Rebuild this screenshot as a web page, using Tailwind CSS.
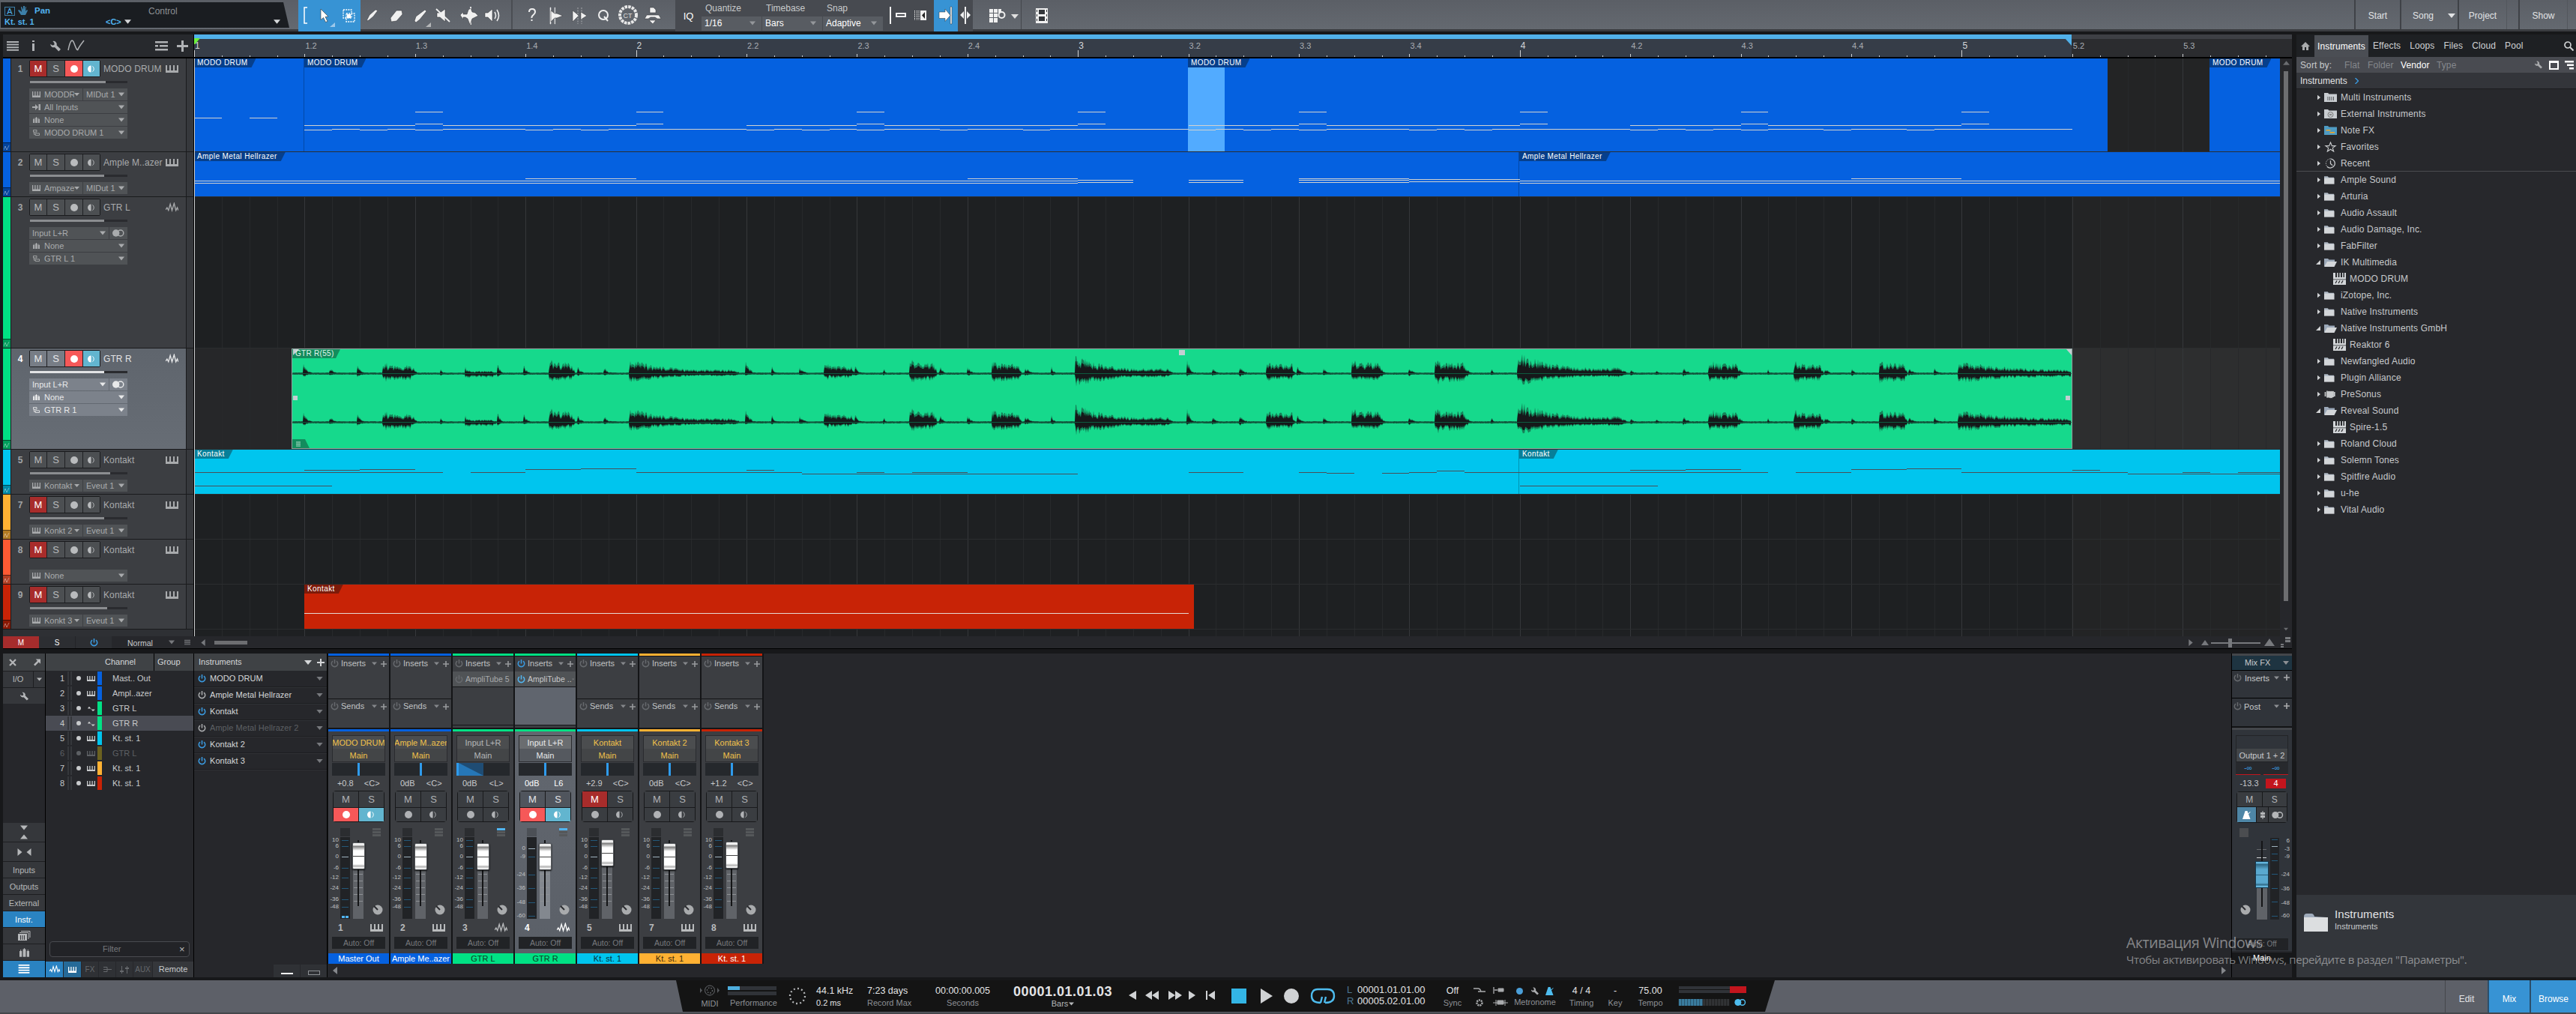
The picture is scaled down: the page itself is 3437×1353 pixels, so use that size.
<!DOCTYPE html>
<html lang="en">
<head>
    <meta charset="UTF-8">
    <meta name="viewport" content="width=device-width, initial-scale=1.0">
    <title>Studio One - Song</title>
    <script src="https://cdn.jsdelivr.net/npm/@tailwindcss/browser@4"></script>
    <style> body { font-family: 'Liberation Sans', Arial, sans-serif; } </style>
</head>
<body class="w-[3437px] h-[1353px] overflow-hidden bg-[#17181a] text-[#c8cacc] text-[11px] leading-none flex flex-col relative whitespace-nowrap">

    <!-- Icon sprite -->
    <svg class="hidden">
        <symbol id="keys" viewBox="0 0 17 10" preserveAspectRatio="none"><path fill="currentColor" d="M0 0h2v7h3V0h2v7h3V0h2v7h3V0h2v10H0z"/></symbol>
        <symbol id="wave" viewBox="0 0 18 14"><path fill="none" stroke="currentColor" stroke-width="1.400" d="M0 10l2-3 2 4L6.500 2 9 11 12 1l2.500 10 2-4 1.500 4"/></symbol>
        <symbol id="sine" viewBox="0 0 12 8"><path fill="currentColor" d="M0 4h1q2-5 4-1l1 2h1h5q-3 5-5 1L6 4z"/></symbol>
        <symbol id="down" viewBox="0 0 10 6"><path fill="currentColor" d="M0 0h10L5 6z"/></symbol>
        <symbol id="right" viewBox="0 0 6 10"><path fill="currentColor" d="M0 0v10l6-5z"/></symbol>
        <symbol id="left" viewBox="0 0 6 10"><path fill="currentColor" d="M6 0v10L0 5z"/></symbol>
        <symbol id="power" viewBox="0 0 12 12"><path fill="none" stroke="currentColor" stroke-width="1.700" d="M3.300 2.200a4.600 4.600 0 1 0 5.400 0M6 0v6"/></symbol>
        <symbol id="plus" viewBox="0 0 10 10"><path fill="currentColor" d="M4 0h2v4h4v2H6v4H4V6H0V4h4z"/></symbol>
        <symbol id="monitor" viewBox="0 0 12 10"><path fill="currentColor" d="M5 0v10a5 5 0 0 1 0-10z"/><path fill="none" stroke="currentColor" d="M7 1a5 5 0 0 1 0 8"/></symbol>
        <symbol id="stereo" viewBox="0 0 17 10"><circle cx="5" cy="5" r="5" fill="currentColor"/><circle cx="11.500" cy="5" r="4.200" fill="none" stroke="currentColor" stroke-width="1.600"/></symbol>
        <symbol id="auto" viewBox="0 0 8 8"><path fill="none" stroke="currentColor" stroke-width=".8" d="M0 7l2-5 2 5 3-6"/></symbol>
        <symbol id="input" viewBox="0 0 11 8"><path fill="currentColor" d="M0 3h4V0l4 4-4 4V5H0zM8.500 0H11v8H8.500z"/></symbol>
        <symbol id="faders" viewBox="0 0 10 9"><path fill="currentColor" d="M0 3h2.500v6H0zM3.500 1h3v8h-3zM7.500 3H10v6H7.500zM4.500 0h1v2h-1zM1 1.500h.7V4H1zM8.300 1.500H9V4h-.7z"/></symbol>
        <symbol id="layers" viewBox="0 0 10 9"><path fill="none" stroke="currentColor" d="M.5.5h5v3h-5zM3.500 5.500h6v3h-6zM1.500 3.500V7h2"/></symbol>
        <symbol id="wrench" viewBox="0 0 14 14"><path fill="currentColor" d="M4 1a4 4 0 0 1 5 5l5 5-2.500 2.500-5-5a4 4 0 0 1-5.300-4L3.500 6 6 5.500 6 3z"/></symbol>
        <symbol id="list" viewBox="0 0 16 13"><path fill="currentColor" d="M0 0h16v2H0zM0 3.600h16v2H0zM0 7.200h16v2H0zM0 10.800h16v2H0z"/></symbol>
        <symbol id="folder" viewBox="0 0 15 11"><path fill="#aeb8c4" d="M0 0h5l1.500 1.500H14V4H0z"/><path fill="#d3d6d9" d="M0 2.500h14.500V11H0z"/></symbol>
        <symbol id="folder-open" viewBox="0 0 17 11"><path fill="#9ba8b8" d="M0 0h5l1.500 1.500H14V4L1 10H0z"/><path fill="#d3d6d9" d="M4 4h13l-3.500 7H0z"/></symbol>
        <symbol id="folder-multi" viewBox="0 0 17 12"><path fill="#c9cdd1" d="M0 0h5l1.500 1.500H17V12H0z"/><path stroke="#55585c" d="M5 5v5M7.500 5v5M10 5v5M12.500 5v5"/></symbol>
        <symbol id="folder-ext" viewBox="0 0 17 12"><path fill="#c9cdd1" d="M0 0h5l1.500 1.500H17V12H0z"/><circle cx="8.500" cy="7" r="3.500" fill="none" stroke="#777"/><path stroke="#777" d="M7 8l3-2M7 6l3 2"/></symbol>
        <symbol id="folder-fx" viewBox="0 0 17 12"><path fill="#4f9cc4" d="M0 0h5l1.500 1.500H17V12H0z"/><path fill="#f5a623" d="M2.500 5h6v1.500h-6zM7.500 8H14v1.500H7.500z"/></symbol>
        <symbol id="star" viewBox="0 0 16 15"><path fill="none" stroke="#c8cacc" stroke-width="1.200" d="M8 1l2 5h5l-4 3 1.500 5L8 11l-4.500 3L5 9 1 6h5z"/></symbol>
        <symbol id="recent" viewBox="0 0 16 15"><path fill="none" stroke="#c8cacc" stroke-width="1.400" d="M8 1a6.500 6.500 0 1 1-5 11M8 3.500V8l3 2.500"/><path fill="none" stroke="#c8cacc" stroke-dasharray="1.500 1.500" d="M2.500 11A6.500 6.500 0 0 1 8 1"/></symbol>
        <symbol id="vst" viewBox="0 0 17 16"><path fill="#d3d6d9" d="M0 0h17v16H0z"/><path fill="#27282c" d="M3 0h2v6H3zM6.500 0h2v6h-2zM10 0h2v6h-2zM13.500 0h1.500v6h-1.500zM0 8.500h17v.7H0z"/><path stroke="#27282c" stroke-width="1.300" d="M3 14l2-3.500M7 14l2-3.500M11 14l2-3.500"/></symbol>
        <symbol id="presonus" viewBox="0 0 15 12"><path fill="none" stroke="#c8cacc" stroke-width="1.700" d="M1.500 3v6M4 1.500v9L6 2v8.500L8 2v9l2-9v9l2-9v8M13.800 3v6"/></symbol>
        <symbol id="metro" viewBox="0 0 12 12"><path fill="currentColor" d="M4 0h3l4.500 12H0zM8 4l3-3 .7.7L8.500 5z"/></symbol>
    </svg>

    <!-- Toolbar -->
    <header class="h-[42px] shrink-0 flex bg-gradient-to-b from-[#5b5f66] to-[#646970] border-b-[3px] border-[#3a3c40]">
        <div class="w-[398px] pt-[3px] pl-px">
            <div class="w-[385px] h-[34px] bg-[#1a1d21] [clip-path:polygon(0_0,377px_0,100%_100%,0_100%)] px-[5px] pt-[4px] text-[12px]">
                <div class="flex items-center h-[15px] text-[#51b4ef]">
                    <span class="w-[14px] h-[12px] border border-[#3c7fa8] text-[11px] text-center mr-1">A</span>
                    <svg class="w-[14px] h-[13px]" viewBox="0 0 14 13"><path fill="#3c7fa8" d="M3 6L1 5 0 6l4 6h6l3-6-1-1-2 2 1-6h-1L9 5V0H7v5L5 1H4l1 7z"/></svg>
                    <span class="ml-2 font-bold text-[11.500px] w-[152px]">Pan</span>
                    <span class="text-[#8d9094]">Control</span>
                </div>
                <div class="flex items-center h-[14px] text-[#51b4ef] text-[11px] font-bold">
                    <span class="w-[135px]">Kt. st. 1</span><span>&lt;C&gt;</span>
                    <svg class="w-[9px] h-[6px] ml-1 text-[#d5d7d9]"><use href="#down"/></svg>
                    <svg class="w-[9px] h-[6px] ml-[190px] text-[#d5d7d9]"><use href="#down"/></svg>
                </div>
            </div>
        </div>
        <div class="w-[83px] h-[42px] bg-[#3793d4] flex items-center text-white">
            <svg class="w-[83px] h-[42px]" viewBox="0 0 83 42"><path fill="none" stroke="#fff" stroke-width="1.500" d="M12 10H8v21h4"/><path fill="#fff" stroke="#333" stroke-width=".6" d="M30 12l10 10-4 .5 3 6-2.500 1-3-6-3.500 3z"/><path fill="#9cc8ea" d="M49 30v6h-7z"/><path fill="none" stroke="#fff" stroke-width="1.300" stroke-dasharray="2 1.200" d="M60 13h11v11H60zM64 18h11v11H64z"/><path fill="#fff" d="M65 18l6 6M65 19h5v5h-5z"/></svg>
        </div>
        <svg class="w-[420px] h-[39px]" viewBox="0 0 420 39" fill="#f0f0f0" stroke="#2d2f33" stroke-width=".5">
            <path d="M8 28l4-8 8-7 3 1-6 8-6 5zM40 24l8-10 7 0 1 5-8 9-7 1zM72 28l2-6 12-9 2 2-9 11-5 4z"/>
            <path fill="#b5b7b9" stroke="none" d="M94 30v6h-7z"/>
            <path d="M102 17h4l7-5v17l-7-6h-4z"/><path stroke="#f0f0f0" stroke-width="1.800" d="M101 12l18 17M147 9v5M147 28v5"/>
            <path d="M133 20l4-4v3h5l2-6 3-2 2 5 4 1 4 4-4 2-4 2-3 8-3-8-3-2h-3v3z"/>
            <path d="M166 17h4l6-5v17l-6-6h-4z"/><path fill="none" stroke="#f0f0f0" stroke-width="1.500" d="M179 16q3 5 0 9M182 13q5 8 0 15"/>
            <path stroke="#44474c" stroke-width="1.500" d="M202 0v39"/>
            <path fill="none" stroke="#f0f0f0" stroke-width="2" d="M225 16q0-4 4-4t4 4q0 2-2.500 4t-2 4M228.500 26v2"/>
            <path stroke="#f0f0f0" d="M253 10h1v22h-1zM259 10h.6v22h-.6z"/><path d="M254 14l5 4h3l8 3-8 3h-3l-5 5z"/>
            <path d="M283 14l5 4 3 3-3 3-5 5zM294 16l8 5-8 5z"/><path stroke="#f0f0f0" stroke-dasharray="2 1.500" d="M290 10v22M295 10v22"/>
            <circle cx="324" cy="20" r="6" fill="none" stroke="#f0f0f0" stroke-width="2"/><path stroke="#f0f0f0" stroke-width="2" d="M325 22l5 6"/>
            <circle cx="357" cy="20" r="11" fill="none" stroke="#e8e8e8" stroke-width="4" stroke-dasharray="3.500 1.200"/><text x="350.500" y="24" font-size="9" stroke="none" fill="#ddd">CT</text>
            <path d="M386 10h5l3 3v4h-8zM379 25l3-5h16l3 5h-5l-3-2h-6l-3 2zM385 27h9l-4 5z"/>
        </svg>
        <div class="w-[397px] h-[42px] bg-[#474a50] flex items-center">
            <span class="w-[35px] text-center text-[13px] text-white">IQ</span>
            <div class="flex gap-px text-[12px]">
                <div class="w-[80px]"><div class="h-[20px] pl-[5px] pt-[3px]">Quantize</div><div class="h-[19px] bg-[#585c62] flex items-center justify-between pl-1 pr-2 text-white">1/16<svg class="w-[8px] h-[6px] text-[#94979b]"><use href="#down"/></svg></div></div>
                <div class="w-[80px]"><div class="h-[20px] pl-[5px] pt-[3px]">Timebase</div><div class="h-[19px] bg-[#585c62] flex items-center justify-between pl-1 pr-2 text-white">Bars<svg class="w-[8px] h-[6px] text-[#94979b]"><use href="#down"/></svg></div></div>
                <div class="w-[80px]"><div class="h-[20px] pl-[5px] pt-[3px]">Snap</div><div class="h-[19px] bg-[#585c62] flex items-center justify-between pl-1 pr-2 text-white">Adaptive<svg class="w-[8px] h-[6px] text-[#94979b]"><use href="#down"/></svg></div></div>
            </div>
            <svg class="w-[68px] h-[42px]" viewBox="0 0 68 42" fill="#f0f0f0"><path d="M9 9h2v23H9z"/><path fill="none" stroke="#f0f0f0" stroke-width="2" d="M18 18h12v4H18z"/><path d="M50 14h8v13h-8z"/><path fill="#222" d="M56 16v9l-4-4.500z"/><path stroke="#f0f0f0" stroke-dasharray="1.500 1" d="M42.500 14v13M45.500 14v13M48 14v13"/></svg>
            <div class="w-[32px] h-[42px] bg-[#3793d4]"><svg class="w-[32px] h-[42px]" viewBox="0 0 32 42" fill="#fff" stroke="#333" stroke-width=".5"><path d="M7 16h8v-4l7 8.500-7 8v-4H7zM22 9h2v23h-2z"/></svg></div>
            <svg class="w-[19px] h-[42px]" viewBox="0 0 19 42" fill="#f0f0f0"><path d="M9 9h2v23H9zM8 15v10l-5-5zM12 15v10l5-5z"/></svg>
        </div>
        <svg class="w-[140px] h-[39px]" viewBox="0 0 140 39"><path fill="#f0f0f0" d="M22 12h5v5h-5zM28 12h5v5h-5zM34 12h4v5h-4zM22 18h5v5h-5zM28 18h5v5h-5zM22 24h5v6h-5zM28 24h5v6h-5z"/><circle cx="38.500" cy="20" r="4" fill="none" stroke="#f0f0f0" stroke-width="2"/><path fill="#e0e0e0" d="M51 19h10l-5 6z"/><path stroke="#44474c" d="M64.500 0v39"/><path fill="#f0f0f0" d="M84 11h16v20H84z"/><path fill="#33363a" d="M88 13h8v6h-8zM88 22h8v6h-8zM85 13h1v3h-1zM85 19h1v3h-1zM85 25h1v3h-1zM98 13h1v3h-1zM98 19h1v3h-1zM98 25h1v3h-1z"/></svg>
        <nav class="ml-auto flex text-[12px] text-[#e2e3e5] items-stretch">
            <span class="w-[61px] border-l-2 border-[#3f4247] flex items-center justify-center pt-[2px]">Start</span>
            <span class="w-[60px] border-l-2 border-[#3f4247] flex items-center justify-center pt-[2px]">Song</span>
            <span class="w-[17px] flex items-center justify-center pt-[2px]"><svg class="w-[10px] h-[6px]"><use href="#down"/></svg></span>
            <span class="w-[65px] border-l-2 border-[#3f4247] flex items-center justify-center pt-[2px]">Project</span>
            <span class="w-[16px] border-l border-[#53575d]"></span>
            <span class="w-[65px] border-l-2 border-[#3f4247] flex items-center justify-center pt-[2px]">Show</span>
            <span class="w-[12px] border-l border-[#53575d]"></span>
        </nav>
    </header>

    <main class="flex h-[1258px] mt-[4px] pl-[4px] gap-[6px]">
        <div class="w-[3054px] flex flex-col gap-[6px]">

            <!-- Arrangement -->
            <section class="h-[820px] flex flex-col bg-black">
                <div class="flex h-[803px]">
                    <div class="w-[254px] flex flex-col bg-[#2e3034]">
                        <div class="h-[32px] bg-[#27292d] border-b-2 border-black flex items-center text-[#b0b2b5] pl-[5px]">
                            <svg class="w-[16px] h-[13px]"><use href="#list"/></svg>
                            <svg class="w-[5px] h-[14px] ml-[17px]" viewBox="0 0 5 14"><path fill="currentColor" d="M1 0h3v2H1zM1 4h3v10H1z"/></svg>
                            <svg class="w-[15px] h-[15px] ml-[19px]"><use href="#wrench"/></svg>
                            <svg class="w-[24px] h-[16px] ml-[9px]" viewBox="0 0 24 16"><path fill="none" stroke="currentColor" stroke-width="1.500" d="M1 14Q5-6 9 5t5 8 8-12"/></svg>
                            <svg class="w-[17px] h-[13px] ml-[93px]" viewBox="0 0 17 13"><path fill="currentColor" d="M0 0h17v2.500H0zM0 5h4v2.500H0zM6 5h11v2.500H6zM0 10h17v2.500H0z"/></svg>
                            <svg class="w-[15px] h-[15px] ml-[12px]"><use href="#plus"/></svg>
                        </div>
                        <div id="track-list" class="bg-[#1a1b1d]"></div>
                    </div>
                    <div class="w-px bg-black"></div>
                    <div class="w-[2799px] flex flex-col">
                        <div id="ruler" class="relative h-[32px] bg-[#2b2c2f] border-b-2 border-black overflow-hidden"></div>
                        <div class="flex h-[771px]">
                            <div id="timeline" class="relative w-[2783px] bg-[#1e2022] overflow-hidden"></div>
                            <div class="w-[16px] bg-[#26272b] flex flex-col items-center pt-[3px]">
                                <svg class="w-[9px] h-[6px] text-[#6a6c70] rotate-180"><use href="#down"/></svg>
                                <div class="w-[6px] mt-[8px] h-[707px] bg-[#6d6e71]"></div>
                                <svg class="w-[6px] h-[5px] text-[#6a6c70] mt-[35px]"><use href="#down"/></svg>
                            </div>
                        </div>
                    </div>
                </div>
                <div class="h-[17px] bg-[#26272b] flex items-center border-b border-black text-[10px] text-white">
                    <span class="w-[48px] h-[16px] bg-[#a62c2c] flex items-center justify-center pt-px">M</span>
                    <span class="w-[49px] h-[16px] bg-[#2c2e32] border-r border-[#232428] flex items-center justify-center pt-px">S</span>
                    <span class="w-[48px] h-[16px] bg-[#2c2e32] flex items-center justify-center text-[#3a9ae0]"><svg class="w-[11px] h-[11px]"><use href="#power"/></svg></span>
                    <span class="ml-[21px] w-[53px] text-[#c8cacc] text-[10.500px] pt-[2px]">Normal</span>
                    <svg class="w-[8px] h-[6px] ml-[2px] text-[#77797d]"><use href="#down"/></svg>
                    <svg class="w-[8px] h-[8px] ml-[13px] text-[#77797d]"><use href="#list"/></svg>
                    <svg class="w-[6px] h-[9px] ml-[14px] text-[#77797d]"><use href="#left"/></svg>
                    <span class="ml-[12px] w-[44px] h-[5px] bg-[#6d6e71]"></span>
                    <svg class="w-[6px] h-[9px] ml-auto text-[#77797d]"><use href="#right"/></svg>
                    <svg class="w-[122px] h-[15px] ml-[9px] mr-[1px]" viewBox="0 0 122 15" fill="#77797d"><path d="M2 11l5-7 5 7zM15 7h66v2H15zM38 2h5v12h-5zM86 12l7-10 7 10zM114 0h7v3h-7zM114 4h7v3h-7zM108 9h4v2h-4zM108 12h4v2h-4z"/></svg>
                </div>
            </section>

            <!-- Mixer console -->
            <section class="h-[432px] flex gap-px bg-black">
                <div class="w-[56px] flex flex-col gap-px bg-[#1d1e21] text-[#b5b7b9]">
                    <div class="h-[23px] bg-[#3f4245] flex items-center justify-between px-[8px]">
                        <svg class="w-[10px] h-[10px]" viewBox="0 0 10 10"><path stroke="currentColor" stroke-width="2.200" d="M1 1l8 8M9 1L1 9"/></svg>
                        <svg class="w-[9px] h-[10px] mr-[-2px]" viewBox="0 0 10 10"><path fill="currentColor" d="M3 0h7v7L7.500 4.500 2 10 0 8l5.500-5.500z"/></svg>
                    </div>
                    <div class="h-[21px] flex gap-px"><span class="w-[40px] bg-[#35373b] flex items-center justify-center">I/O</span><span class="w-[15px] bg-[#35373b] flex items-center justify-center"><svg class="w-[7px] h-[5px]"><use href="#down"/></svg></span></div>
                    <div class="h-[21px] bg-[#35373b] flex items-center justify-center"><svg class="w-[12px] h-[12px]"><use href="#wrench"/></svg></div>
                    <div class="h-[159px] -my-px bg-[#26272b]"></div>
                    <div class="h-[25px] bg-[#35373b] flex flex-col items-center justify-between py-[3px]"><svg class="w-[10px] h-[7px]"><use href="#down"/></svg><svg class="w-[10px] h-[7px] rotate-180"><use href="#down"/></svg></div>
                    <div class="h-[25px] bg-[#35373b] flex items-center justify-center gap-[5px]"><svg class="w-[7px] h-[10px]"><use href="#right"/></svg><svg class="w-[7px] h-[10px]"><use href="#left"/></svg></div>
                    <div class="h-[21px] bg-[#35373b] flex items-center justify-center pt-px">Inputs</div>
                    <div class="h-[21px] bg-[#35373b] flex items-center justify-center pt-px">Outputs</div>
                    <div class="h-[21px] bg-[#35373b] flex items-center justify-center pt-px">External</div>
                    <div class="h-[21px] bg-[#2a83c2] flex items-center justify-center pt-px text-white">Instr.</div>
                    <div class="h-[21px] bg-[#35373b] flex items-center justify-center"><svg class="w-[17px] h-[13px]" viewBox="0 0 17 13"><path fill="currentColor" d="M0 4h12v9H0z"/><path stroke="#35373b" d="M3.500 6v6M6 6v6M8.500 6v6"/><path fill="none" stroke="currentColor" d="M2 2.500h12V11M4 .5h12V9"/></svg></div>
                    <div class="h-[21px] bg-[#35373b] flex items-center justify-center"><svg class="w-[13px] h-[12px]"><use href="#faders"/></svg></div>
                    <div class="grow bg-[#2a83c2] flex items-center justify-center text-white"><svg class="w-[16px] h-[12px]"><use href="#list"/></svg></div>
                </div>

                <div class="w-[197px] flex flex-col bg-[#26272b]">
                    <div class="h-[23px] bg-[#3f4245] flex items-center text-[#d5d7d9]"><span class="pl-[79px] w-[145px] h-full flex items-center border-r border-black">Channel</span><span class="pl-[4px]">Group</span></div>
                    <div id="channel-list"></div>
                    <div class="mt-auto mx-[5px] h-[21px] border border-[#494b50] rounded-sm bg-[#222327] flex items-center text-[#77797d]"><span class="w-[160px] pl-[70px]">Filter</span><span class="pl-[12px] text-[13px] text-[#b5b7b9]">×</span></div>
                    <div class="mt-[6px] h-[21px] flex gap-px text-[#66696d]">
                        <span class="w-[23px] bg-[#2a83c2] text-white flex items-center justify-center"><svg class="w-[14px] h-[11px]"><use href="#wave"/></svg></span>
                        <span class="w-[23px] bg-[#266a98] text-white flex items-center justify-center"><svg class="w-[11px] h-[8px]"><use href="#keys"/></svg></span>
                        <span class="w-[22px] bg-[#2f3135] flex items-center justify-center text-[10px]">FX</span>
                        <span class="w-[22px] bg-[#2f3135] flex items-center justify-center"><svg class="w-[11px] h-[7px]" viewBox="0 0 11 7"><path stroke="currentColor" fill="none" d="M0 .5h5v6H0M0 3.500h11"/></svg></span>
                        <span class="w-[22px] bg-[#2f3135] flex items-center justify-center"><svg class="w-[12px] h-[10px]" viewBox="0 0 12 10"><path fill="currentColor" d="M2 0h1v10H2zM0 6h5v2H0zM9 0h1v10H9zM7 2h5v2H7z"/></svg></span>
                        <span class="w-[25px] bg-[#2f3135] flex items-center justify-center text-[10px]">AUX</span>
                        <span class="grow bg-[#35373b] flex items-center justify-center text-[#c8cacc]">Remote</span>
                    </div>
                </div>

                <div class="w-[177px] flex flex-col bg-[#26272b]">
                    <div class="h-[23px] bg-[#3f4245] flex items-center text-[#d5d7d9] pl-[6px] pr-[3px]">Instruments<svg class="w-[10px] h-[6px] ml-auto"><use href="#down"/></svg><svg class="w-[10px] h-[10px] ml-[7px]"><use href="#plus"/></svg></div>
                    <div id="instrument-list"></div>
                    <div class="mt-auto flex justify-end gap-px h-[17px] text-[#b5b7b9]">
                        <span class="w-[35px] bg-[#2f3135] flex justify-center items-end pb-[4px]"><span class="w-[16px] h-[2px] bg-white"></span></span>
                        <span class="w-[35px] bg-[#2f3135] flex justify-center items-end pb-[3px]"><span class="w-[16px] h-[6px] border border-[#8d9094]"></span></span>
                    </div>
                </div>

                <div class="w-[2540px] flex flex-col bg-[#26272b]">
                    <div id="strips" class="flex gap-[2px] w-[582px] bg-[#141517] pr-[2px] pl-[1px]"></div>
                    <div class="flex items-center justify-between grow px-[7px] text-[#85878b]"><svg class="w-[6px] h-[10px]"><use href="#left"/></svg><svg class="w-[6px] h-[10px]"><use href="#right"/></svg></div>
                </div>

                <!-- Main output -->
                <div class="w-[80px] flex flex-col bg-[#26272b]">
                    <div class="h-[3px] bg-[#43464a]"></div>
                    <div class="h-[20px] bg-[#1e3441] border-b border-black flex items-center pl-[17px] pr-[4px] justify-between">Mix FX<svg class="w-[8px] h-[5px] text-[#8d9094]"><use href="#down"/></svg></div>
                    <div class="h-[37px] bg-[#30343a] border-b border-black flex items-start pt-[4px] pl-[2px] pr-[3px]"><svg class="w-[11px] h-[11px] text-[#66696d]"><use href="#power"/></svg><span class="ml-[4px] mt-px">Inserts</span><svg class="w-[7px] h-[5px] ml-auto mt-[3px] text-[#8d9094]"><use href="#down"/></svg><svg class="w-[8px] h-[8px] ml-[6px] mt-px text-[#a9abad]"><use href="#plus"/></svg></div>
                    <div class="h-[39px] bg-[#30343a] border-b-2 border-[#121315] flex items-start pt-[5px] pl-[2px] pr-[3px]"><svg class="w-[11px] h-[11px] text-[#66696d]"><use href="#power"/></svg><span class="ml-[3px] mt-px">Post</span><svg class="w-[7px] h-[5px] ml-auto mt-[3px] text-[#8d9094]"><use href="#down"/></svg><svg class="w-[8px] h-[8px] ml-[6px] mt-px text-[#a9abad]"><use href="#plus"/></svg></div>
                    <div class="h-[298px] bg-[#30343a] border-t-[3px] border-[#43464a] flex flex-col px-[5px] pt-[7px]">
                        <div class="h-[36px] border border-[#222427] flex flex-col justify-end"><div class="h-[17px] bg-[#424548] flex items-center justify-center pt-px">Output 1 + 2</div></div>
                        <div class="h-[17px] flex gap-[4px] text-[#3a9ae0] text-[10px] bg-[#27292d]"><span class="grow border-b border-[#c3151d] flex items-center justify-center">-∞</span><span class="grow border-b border-[#c3151d] flex items-center justify-center">-∞</span></div>
                        <div class="h-[22px] flex items-center"><span class="w-[36px] text-center">-13.3</span><span class="ml-[4px] w-[27px] h-[13px] bg-[#c3151d] text-white flex items-center justify-center">4</span></div>
                        <div class="mx-[1px] h-[42px] border border-[#17181a] rounded-sm flex flex-col gap-px bg-[#17181a] text-[#b5b7b9]">
                            <div class="h-[19px] flex gap-px text-[12px]"><span class="w-1/2 bg-[#393c40] flex items-center justify-center">M</span><span class="w-1/2 bg-[#393c40] flex items-center justify-center">S</span></div>
                            <div class="h-[20px] flex gap-px"><span class="w-[25px] bg-[#4e86a6] text-white flex items-center justify-center"><svg class="w-[11px] h-[11px]"><use href="#metro"/></svg></span><span class="w-[15px] bg-[#393c40] flex items-center justify-center"><svg class="w-[6px] h-[11px]" viewBox="0 0 6 11"><path fill="currentColor" d="M2.500 0h1v11h-1zM0 2h6v3H0zM0 6h6v3H0z"/></svg></span><span class="grow bg-[#393c40] flex items-center justify-center"><svg class="w-[16px] h-[9px]"><use href="#stereo"/></svg></span></div>
                        </div>
                        <div id="main-fader" class="relative h-[131px] mt-[7px] -mx-[5px]"></div>
                        <div class="h-[16px] mt-[16px] bg-[#212326] flex items-center justify-center text-[10px] text-[#77797d]">Auto: Off</div>
                    </div>
                    <div class="h-[15px] mt-[2px] bg-[#17181a] flex items-center justify-center text-white">Main</div>
                </div>
            </section>
        </div>

        <!-- Browser -->
        <aside class="w-[373px] flex flex-col bg-[#27282c]">
            <nav class="h-[30px] bg-[#1e2023] flex items-center text-[12px] text-[#d0d2d4] tracking-[.1px]">
                <svg class="w-[12px] h-[11px] ml-[6px] mr-[6px] text-[#a9abad]" viewBox="0 0 12 11"><path fill="currentColor" d="M6 0l6 6h-2v5H7V7H5v4H2V6H0z"/></svg>
                <span class="w-[72px] h-[29px] self-end bg-[#4b4e54] flex items-center justify-center text-white">Instruments</span>
                <span class="ml-[6px]">Effects</span><span class="ml-[12px]">Loops</span><span class="ml-[12px]">Files</span><span class="ml-[12px]">Cloud</span><span class="ml-[12px]">Pool</span>
                <svg class="w-[13px] h-[13px] ml-auto mr-[3px]" viewBox="0 0 13 13"><circle cx="5" cy="5" r="4" fill="none" stroke="currentColor" stroke-width="1.700"/><path stroke="currentColor" stroke-width="2" d="M8 8l4.500 4.500"/></svg>
            </nav>
            <div class="h-[21px] bg-[#494b51] flex items-center text-[12px] text-[#85888d] pl-[5px] tracking-[.1px]">
                <span class="text-[#c8cacc] w-[59px]">Sort by:</span><span class="w-[31px]">Flat</span><span class="w-[44px]">Folder</span><span class="w-[48px] text-white">Vendor</span><span>Type</span>
                <svg class="w-[11px] h-[11px] ml-auto mr-[9px] text-[#a9abad]"><use href="#wrench"/></svg>
                <span class="w-[13px] h-[12px] border-2 border-t-[3px] border-white mr-[8px]"></span>
                <svg class="w-[12px] h-[12px] mr-[3px]" viewBox="0 0 12 12"><path fill="#fff" d="M0 0h12v2.500H0zM3 4.500h9V7H3zM6 9h6v2.500H6z"/></svg>
            </div>
            <div class="h-[22px] bg-[#33353a] border-b border-[#1b1c1f] flex items-center text-[12px] text-[#e2e3e5] pl-[5px]">Instruments<svg class="w-[5px] h-[8px] ml-[10px]" viewBox="0 0 5 8"><path fill="none" stroke="#3a9ae0" stroke-width="1.400" d="M.5 0l4 4-4 4"/></svg></div>
            <div id="browser-list" class="grow text-[12px] tracking-[.18px]"></div>
            <div class="h-[110px] bg-[#33363b] flex pl-[10px] pt-[25px]">
                <svg class="w-[32px] h-[24px]" viewBox="0 0 32 24"><path fill="#9fabbb" d="M0 4Q0 0 4 0h6q3 0 4 4l16 1v3H0z"/><path fill="#dcdee0" d="M0 5h32v19H0z"/></svg>
                <div class="ml-[9px] -mt-[8px]"><div class="text-[15px] text-[#e2e3e5] leading-[17px] tracking-[.1px]">Instruments</div><div class="mt-[3px] text-[11px]">Instruments</div></div>
            </div>
        </aside>
    </main>

    <!-- Transport -->
    <footer class="mt-[4px] h-[45px] bg-[#5d6068] border-b-2 border-[#44464b] flex items-stretch">
        <div class="ml-[902px] w-[1466px] h-[42px] bg-[#141414] [clip-path:polygon(0_0,100%_0,1453px_100%,9px_100%)] flex text-[#8d9094]">
            <div class="ml-[30px] w-[30px] flex flex-col items-center pt-[6px]"><svg class="w-[28px] h-[15px]" viewBox="0 0 28 15"><circle cx="14" cy="7.500" r="6.500" fill="none" stroke="#66696d"/><circle cx="14" cy="7.500" r="3.500" fill="none" stroke="#66696d" stroke-width="1.500" stroke-dasharray="1.500 2"/><path fill="#55585c" d="M1 4v7l3-3.500zM24 4v7l3-3.500z"/></svg><span class="mt-[5px]">MIDI</span></div>
            <div class="w-[78px] pt-[8px] pl-[9px]"><div class="w-[65px] h-[5px] bg-[#303338]"><div class="w-[16px] h-[5px] bg-[#4eaede]"></div></div><div class="w-[65px] h-[5px] bg-[#303338] mt-[2px]"></div><div class="mt-[5px] pl-[3px]">Performance</div></div>
            <svg class="w-[26px] h-[26px] ml-[11px] mt-[8px]" viewBox="0 0 26 26"><circle cx="13" cy="13" r="10" fill="none" stroke="#b5b7b9" stroke-width="2.300" stroke-dasharray="2 3.200"/></svg>
            <div class="ml-[12px] w-[68px] pt-[8px] text-[#e2e3e5] text-[12.500px]"><div>44.1 kHz</div><div class="mt-[4px] text-[11px]">0.2 ms</div></div>
            <div class="w-[89px] pt-[8px]"><div class="text-[#e2e3e5] text-[12.500px]">7:23 days</div><div class="mt-[4px]">Record Max</div></div>
            <div class="w-[77px] pt-[8px] text-center"><div class="text-[#e2e3e5] text-[12.500px]">00:00:00.005</div><div class="mt-[4px]">Seconds</div></div>
            <div class="ml-[27px] w-[136px] pt-[6px] text-center text-[#b5b7b9]"><div class="text-[#e2e3e5] text-[18px] font-bold tracking-[.5px]">00001.01.01.03</div><div class="flex justify-center items-center mt-[2px] gap-px">Bars<svg class="w-[7px] h-[5px]"><use href="#down"/></svg></div></div>
            <svg class="w-[298px] h-[42px] ml-[13px]" viewBox="0 0 298 42" fill="#d0d2d4"><path d="M17 14v12l-10-6zM38 14v12l-9-6zM47 14v12l-9-6zM60 14v12l9-6zM69 14v12l9-6zM87 14v12l9-6zM110 14h2v12h-2zM122 14v12l-9-6z"/><path fill="#33b5e5" d="M144 11h20v20h-20z"/><path d="M183 11v20l16-10z"/><circle cx="224" cy="21" r="10"/><path fill="none" stroke="#4ebcee" stroke-width="2.400" d="M263 30q-12 0-12-9 0-9 8-9h13q9 0 9 9 0 9-12 9M263 30l2-8M268 30l2-8"/></svg>
            <div class="w-[128px] pt-[6px] text-[13px] text-[#e2e3e5]"><div class="flex"><span class="w-[14px] text-[#4d7895]">L</span>00001.01.01.00</div><div class="flex mt-[2px]"><span class="w-[14px] text-[#4d7895]">R</span>00005.02.01.00</div></div>
            <div class="w-[26px] pt-[8px] text-center"><div class="text-[#e2e3e5] text-[12.500px]">Off</div><div class="mt-[4px]">Sync</div></div>
            <svg class="w-[50px] h-[42px] ml-[14px]" viewBox="0 0 50 42" fill="none" stroke="#a9abad"><path stroke-width="1.300" d="M1 11h6q3 0 4 4h6M7 15h4M28 9v9M29 13h4"/><path fill="#a9abad" d="M34 11h7v4h-7zM33 27h8v5h-8z"/><circle cx="9" cy="30" r="3.500" stroke-width="2.500" stroke-dasharray="2 1"/><path d="M31 26v8M43 26v8M27 30h20"/></svg>
            <div class="w-[56px] pt-[8px] text-center ml-[5px]"><div class="flex h-[12px] items-center justify-between px-[3px]"><span class="w-[9px] h-[9px] rounded-full bg-[#4b9fd8]"></span><svg class="w-[11px] h-[11px] text-[#a9abad]"><use href="#wrench"/></svg><svg class="w-[11px] h-[11px] text-[#4ebcee]"><use href="#metro"/></svg></div><div class="mt-[4px]">Metronome</div></div>
            <div class="w-[34px] pt-[8px] text-center ml-[17px]"><div class="text-[#e2e3e5] text-[12.500px]">4 / 4</div><div class="mt-[4px]">Timing</div></div>
            <div class="w-[20px] pt-[8px] text-center ml-[18px]"><div class="text-[#e2e3e5] text-[12.500px]">-</div><div class="mt-[4px]">Key</div></div>
            <div class="w-[36px] pt-[8px] text-center ml-[19px]"><div class="text-[#e2e3e5] text-[12.500px]">75.00</div><div class="mt-[4px]">Tempo</div></div>
            <div class="ml-[20px] pt-[8px] w-[92px]">
                <div class="flex"><div class="w-[68px] flex flex-col gap-px"><span class="h-[4px] bg-[#303338]"></span><span class="h-[4px] bg-[#303338]"></span></div><span class="w-[22px] h-[9px] bg-[#c3151d]"></span></div>
                <div class="flex items-center mt-[8px]"><span class="w-[32px] h-[9px] bg-[repeating-linear-gradient(90deg,#4eaede_0_1px,#1d3545_1px_2px)]"></span><span class="w-[36px] h-[9px] bg-[repeating-linear-gradient(90deg,#44474b_0_1px,#141414_1px_2px)] mr-[6px]"></span><svg class="w-[16px] h-[9px] text-[#4ebcee]"><use href="#stereo"/></svg></div>
            </div>
        </div>
        <nav class="ml-auto flex text-[12px] items-stretch text-[#e2e3e5]">
            <span class="w-[57px] border-l border-[#44464b] flex items-center justify-center pt-[6px]">Edit</span>
            <span class="w-[56px] bg-[#3793d4] border-l-2 border-[#2b4f6b] flex items-center justify-center pt-[6px] text-white">Mix</span>
            <span class="w-[62px] bg-[#3793d4] border-l-2 border-[#2b4f6b] flex items-center justify-center pt-[6px] text-white">Browse</span>
        </nav>
    </footer>

    <!-- Activation notice -->
    <div class="absolute left-[2837px] top-[1245px] text-white/45 font-['Open_Sans','Noto_Sans',sans-serif]">
        <div class="text-[19.500px] leading-[25px] tracking-[-.45px]">Активация Windows</div>
        <div class="text-[15px] leading-[20px] tracking-[-.39px]">Чтобы активировать Windows, перейдите в раздел "Параметры".</div>
    </div>

    <script>
        const icon = (id, cls) => `<svg class="${cls}"><use href="#${id}"/></svg>`;
        const el = id => document.getElementById(id);

        // ---- Track headers ----
        const tracks = [
            { n: 1, name: 'MODO DRUM', color: '#0561e0', h: 124, type: 'keys', mute: 1, rec: 1, vol: 78, rows: [['keys', 'MODDR', 'MIDut 1'], ['input', 'All Inputs'], ['faders', 'None'], ['layers', 'MODO DRUM 1']] },
            { n: 2, name: 'Ample M..azer', color: '#0561e0', h: 59, type: 'keys', vol: 76, rows: [['keys', 'Ampaze', 'MIDut 1']] },
            { n: 3, name: 'GTR L', color: '#00e184', h: 201, type: 'wave', vol: 76, rows: [['', 'Input L+R'], ['faders', 'None'], ['layers', 'GTR L 1']] },
            { n: 4, name: 'GTR R', color: '#00e184', h: 134, type: 'wave', rec: 1, sel: 1, vol: 76, rows: [['', 'Input L+R'], ['faders', 'None'], ['layers', 'GTR R 1']] },
            { n: 5, name: 'Kontakt', color: '#00c5ee', h: 59, type: 'keys', vol: 82, rows: [['keys', 'Kontakt', 'Eveut 1']] },
            { n: 7, name: 'Kontakt', color: '#ffb133', h: 59, type: 'keys', mute: 1, vol: 76, rows: [['keys', 'Konkt 2', 'Eveut 1']] },
            { n: 8, name: 'Kontakt', color: '#ff5a33', h: 59, type: 'keys', mute: 1, vol: 0, rows: [['keys', 'None']] },
            { n: 9, name: 'Kontakt', color: '#c82306', h: 59, type: 'keys', mute: 1, vol: 79, rows: [['keys', 'Konkt 3', 'Eveut 1']] },
        ];

        const slot = (t, r) => {
            const bg = t.sel ? 'bg-[#7c828b] text-[#e8e9ea]' : 'bg-[#505356] text-[#a9abad]';
            const arrow = icon('down', 'w-[8px] h-[6px] shrink-0 ml-auto');
            const ic = r[0] ? icon(r[0], 'w-[11px] h-[8px] mr-[5px] shrink-0') : '';
            if (r[2]) return `<div class="flex gap-px h-[16px]"><div class="w-[71px] ${bg} flex items-center px-[4px]">${ic}<span class="overflow-hidden w-[40px] shrink-0">${r[1]}</span>${icon('down', 'w-[7px] h-[6px] shrink-0')}</div><div class="w-[59px] ${bg} flex items-center px-[4px]">${r[2]}${arrow}</div></div>`;
            if (!r[0]) return `<div class="flex gap-px h-[16px]"><div class="w-[106px] ${bg} flex items-center px-[4px]">${r[1]}${arrow}</div><div class="w-[24px] ${bg} flex items-center justify-center">${icon('stereo', 'w-[16px] h-[10px]')}</div></div>`;
            return `<div class="w-[131px] h-[16px] ${bg} flex items-center px-[4px]">${ic}${r[1]}${arrow}</div>`;
        };

        el('track-list').innerHTML = tracks.map(t => {
            const btn = t.sel ? 'bg-[#777d86] text-[#e8e9ea]' : 'bg-[#4c4f52] text-[#b9bbbd]';
            return `
            <div class="flex mb-px" style="height:${t.h}px">
                <div class="w-[10px] flex flex-col justify-end" style="background:${t.color}"><div class="h-[12px] bg-black/30 border-t border-black/50 flex items-center justify-center text-white/50">${icon('auto', 'w-[8px] h-[8px]')}</div></div>
                <div class="w-[233px] ml-px ${t.sel ? 'bg-gradient-to-b from-[#5f656d] to-[#676d75]' : 'bg-[#3c3e42]'}">
                    <div class="flex items-center pt-[2px]">
                        <span class="w-[24px] text-center text-[12px] font-bold ${t.sel ? 'text-white' : 'text-[#a0a3a6]'}">${t.n}</span>
                        <div class="flex gap-px border border-[#1a1b1d] rounded-xs bg-[#1f2023] h-[23px] text-[13px]">
                            <span class="w-[22px] flex items-center justify-center ${t.mute ? 'bg-[#a82c2b] text-white' : btn}">M</span>
                            <span class="w-[23px] flex items-center justify-center ${btn}">S</span>
                            <span class="w-[23px] flex items-center justify-center ${t.rec ? 'bg-[#f65858] text-white' : btn}"><i class="w-[10px] h-[10px] rounded-full bg-current"></i></span>
                            <span class="w-[22px] flex items-center justify-center ${t.rec ? 'bg-[#62b5cf] text-white' : btn}">${icon('monitor', 'w-[11px] h-[10px]')}</span>
                        </div>
                        <span class="ml-[4px] w-[83px] pt-px text-[12px] tracking-[.1px] ${t.sel ? 'text-[#e2e3e5]' : 'text-[#a9abad]'}">${t.name}</span>
                        <span class="${t.sel ? 'text-[#e8e9ea]' : 'text-[#a9abad]'}">${icon(t.type, t.type === 'keys' ? 'w-[17px] h-[10px]' : 'w-[17px] h-[14px]')}</span>
                    </div>
                    <div class="ml-[25px] mt-[5px] w-[130px] h-[3px] ${t.vol ? 'bg-[#2a2b2f]' : ''}"><div class="h-[3px] ${t.sel ? 'bg-[#e2e3e5]' : 'bg-[#8b8d90]'}" style="width:${t.vol}%"></div></div>
                    <div class="ml-[24px] mt-[7px] flex flex-col gap-px">${t.rows.map(r => slot(t, r)).join('')}</div>
                </div>
                <div class="grow ml-px bg-[#36383c]"></div>
            </div>`;
        }).join('');

        // ---- Ruler: one step is a sixteenth ----
        const STEP = 36.85;
        let ruler = '<div class="absolute left-0 top-0 w-[2505px] h-[32px] bg-[#363d48]"></div><div class="absolute left-0 top-0 w-[2505px] h-[6px] bg-[#51b1ea]"></div><div class="absolute left-[2505px] top-0 w-[294px] h-[6px] bg-[#3e4045]"></div>';
        for (let i = 0; i < 76; i++) {
            const bar = Math.floor(i / 16) + 1, beat = (i % 16) / 4 + 1;
            const h = i % 16 === 0 ? 9 : i % 4 === 0 ? 4 : 2;
            ruler += `<div class="absolute bottom-0 w-px bg-[#d0d2d4]" style="left:${Math.round(i * STEP)}px;height:${h}px"></div>`;
            if (i % 4 === 0) ruler += `<span class="absolute top-[9px] ${beat === 1 ? 'text-[12px] text-[#d5d7d9]' : 'text-[11px] mt-px text-[#a9adb3]'}" style="left:${i * STEP + 1}px">${beat === 1 ? bar : bar + '.' + beat}</span>`;
        }
        ruler += '<svg class="absolute left-0 top-[5px] w-[8px] h-[8px]" viewBox="0 0 8 8"><path fill="#6cf03c" d="M0 0h8L1 8H0z"/></svg><svg class="absolute left-[2496px] top-[5px] w-[9px] h-[10px]" viewBox="0 0 9 10"><path fill="#51b1ea" d="M0 0h9v10z"/></svg>';
        el('ruler').innerHTML = ruler;

        // ---- Timeline canvas ----
        const X0 = 259, Y0 = 78;
        let tl = '<div class="absolute left-[2505px] top-0 w-[278px] h-[771px] bg-[#232425]"></div><div class="absolute left-0 top-[387px] w-[2783px] h-[134px] bg-[#262729]"></div><div class="absolute left-[2505px] top-[387px] w-[278px] h-[134px] bg-[#2d2e2f]"></div>';
        for (let i = 1; i < 76; i++) tl += `<div class="absolute top-0 w-px h-[771px] ${i % 4 === 0 ? 'bg-[#35373a]' : 'bg-[#27292b]'}" style="left:${Math.round(i * STEP)}px"></div>`;
        [202, 262, 464, 599, 659, 719, 779, 839].forEach(y => tl += `<div class="absolute left-0 w-full h-px bg-[#2b2d2f]" style="top:${y - Y0}px"></div>`);

        const tagColor = { '#0561e0': '#063f8c', '#00c5ee': '#077f99', '#c82306': '#7d1a09' };
        const clip = (x1, x2, y1, y2, color, label) => {
            tl += `<div class="absolute" style="left:${x1 - X0}px;top:${y1 - Y0}px;width:${x2 - x1}px;height:${y2 - y1}px;background:${color}">` +
                (label ? `<span class="inline-block h-[12px] pl-[4px] pr-[11px] text-[10px] leading-[12px] tracking-[.4px] text-white [clip-path:polygon(0_0,100%_0,calc(100%_-_6px)_100%,0_100%)]" style="background:${tagColor[color]}">${label}</span>` : '') + '</div>';
        };
        clip(259, 406, 78, 202, '#0561e0', 'MODO DRUM');
        clip(406, 1585, 78, 202, '#0561e0', 'MODO DRUM');
        clip(1585, 2812, 78, 202, '#0561e0', 'MODO DRUM');
        clip(1585, 1634, 90, 202, '#52abff', '');
        clip(2948, 3042, 78, 202, '#0561e0', 'MODO DRUM');
        clip(259, 2027, 203, 262, '#0561e0', 'Ample Metal Hellrazer');
        clip(2027, 3042, 203, 262, '#0561e0', 'Ample Metal Hellrazer');
        clip(259, 2027, 600, 659, '#00c5ee', 'Kontakt');
        clip(2027, 3042, 600, 659, '#00c5ee', 'Kontakt');
        clip(406, 1593, 780, 839, '#c82306', 'Kontakt');
        // seams between adjoining clips
        [[405, 78, 124], [2026, 203, 59], [2026, 600, 59]].forEach(([x, y, h]) => tl += `<div class="absolute w-px bg-black/25" style="left:${x - X0}px;top:${y - Y0}px;height:${h}px"></div>`);

        // notes: [y, [start, end] in steps ...]
        const note = (y, a, b, c) => tl += `<div class="absolute h-px" style="left:${Math.round(a * STEP)}px;top:${y - Y0}px;width:${Math.round(b * STEP) - Math.round(a * STEP)}px;background:${c}"></div>`;
        const blueNotes = [
            [157, [0, 1], [2, 3]],
            [167, [4, 8], [9, 16], [20, 24], [25, 32], [36, 40], [41, 48], [52, 56], [57, 64]],
            [241, [0, 32], [48, 75.6]], [244, [0, 32], [48, 75.6]], [238, [12, 16], [28, 32], [40, 44], [60, 64]],
            [240, [32, 34], [36, 38], [40, 44]], [243, [32, 34], [36, 38], [40, 44]], [239, [44, 48]], [242, [44, 48]],
        ];
        blueNotes.forEach(([y, ...s]) => s.forEach(([a, b]) => note(y, a, b, '#d2d2d0')));
        for (let i = 8; i <= 64; i += 8) { note(149, i, i + 1, '#d2d2d0'); note(165, i, i + 1, '#d2d2d0'); }
        const low = [4, 6, 8, 12, 14, 20, 22, 24, 27, 30, 36, 38, 40, 44, 46, 52, 54, 56, 59, 62];
        for (let i = 4; i < 68; i++) note(low.includes(i) ? 173 : 172, i, i + 1, '#d2d2d0');
        const cyanNotes = [
            [630, [0, 9], [10, 12], [16, 22], [24, 25], [26, 28], [36, 38], [40, 41], [44, 45], [46, 57], [58, 60], [64, 70], [72, 73], [74, 75.6]],
            [632, [22, 32], [70, 75.6]],
            [648, [0, 5], [48, 53]], [627, [4, 6], [20, 21], [52, 54], [68, 69]], [626, [6, 8], [12, 14], [54, 56], [60, 62]],
            [625, [14, 16], [62, 64]], [631, [41, 42], [43, 44]], [628, [45, 46]],
        ];
        cyanNotes.forEach(([y, ...s]) => s.forEach(([a, b]) => note(y, a, b, '#4a4f57')));
        note(818, 4, 36, '#e6d8d2');

        // Audio clip. Hits: [x, up, down, length, kind], kind 0 = decay, 1 = sustained, 2 and 3 = long fades
        const hits = [
            [405, 12, 6, 25, 0], [440, 7, 3, 28, 0], [477, 9, 5, 30, 0], [511, 12, 10, 40, 1], [551, 8, 4, 20, 0], [588, 5, 3, 23, 0], [621, 4, 6, 40, 1], [621, 8, 3, 10, 0], [664, 12, 5, 19, 0], [699, 9, 4, 24, 0],
            [733, 16, 10, 33, 1], [771, 8, 4, 24, 0], [806, 8, 3, 29, 0], [840, 16, 11, 150, 2], [995, 16, 4, 27, 0], [1030, 9, 3, 16, 0], [1067, 8, 3, 30, 0],
            [1100, 11, 7, 39, 1], [1141, 12, 4, 20, 0], [1179, 8, 3, 11, 0], [1214, 16, 11, 35, 1], [1254, 10, 4, 23, 0], [1291, 8, 4, 26, 0], [1324, 14, 11, 38, 1], [1368, 9, 4, 29, 0], [1403, 8, 4, 22, 0],
            [1435, 20, 16, 132, 2], [1584, 16, 5, 24, 0], [1618, 8, 4, 22, 0], [1654, 9, 5, 30, 0], [1690, 14, 9, 37, 1], [1731, 9, 4, 25, 0], [1766, 7, 3, 26, 0], [1804, 16, 10, 40, 1], [1844, 6, 3, 15, 0],
            [1880, 9, 4, 25, 0], [1915, 16, 13, 43, 1], [1958, 6, 3, 18, 0], [1990, 7, 3, 16, 0], [2025, 24, 15, 148, 2], [2176, 5, 3, 25, 0], [2210, 6, 3, 18, 0], [2246, 8, 4, 30, 0], [2280, 15, 10, 41, 1], [2321, 6, 3, 25, 0],
            [2359, 5, 3, 14, 0], [2394, 14, 11, 38, 1], [2435, 8, 3, 25, 0], [2471, 7, 4, 14, 0], [2508, 15, 12, 36, 1], [2547, 8, 4, 27, 0], [2581, 7, 3, 25, 0], [2613, 16, 14, 150, 3],
        ];
        let seed = 7;
        const rnd = () => (seed = (seed * 16807) % 2147483647) / 2147483647;
        const W = 2374, up = [], dn = [];
        for (let i = 0; i < W; i++) {
            let u = 0.8 + rnd() * .4, d = 0.8 + rnd() * .4;
            hits.forEach(([x, a, b, len, kind]) => {
                const t = (i + 390 - x) / len;
                if (t < 0 || t > 1) return;
                const tail = t > .93 ? (1 - t) * 14 : 1;
                const e = kind === 0 ? Math.exp(-5 * t) : kind === 1 ? (t < .15 ? 1 : .8) * (t > .93 ? .5 : 1) : kind === 2 ? Math.max(Math.exp(-2.2 * t), .3) * tail : .22 + .7 * Math.exp(-2.5 * t);
                u = Math.max(u, a * e * (.45 + rnd() * .6));
                d = Math.max(d, b * e * (.4 + rnd() * .6));
            });
            up.push(u); dn.push(d);
        }
        const wavePath = (cy, k) => {
            let p = `M0 ${cy}`;
            for (let i = 0; i < W; i++) p += `L${i} ${(cy - Math.max(.6, up[i] * k)).toFixed(1)}`;
            for (let i = W - 1; i >= 0; i--) p += `L${i} ${(cy + Math.max(.6, dn[i] * k)).toFixed(1)}`;
            return p + 'z';
        };
        tl += `<div class="absolute left-[130px] top-[387px] w-[2376px] h-[134px] bg-[#16d98c] border border-[#8fa39e]">
            <svg class="w-[2374px] h-[132px]" viewBox="0 0 2374 132">
                ${[32.5, 97.5].map(y => `<path fill="#16181a" fill-opacity=".45" d="${wavePath(y, 1.15)}"/><path fill="#16181a" d="${wavePath(y, .82)}"/><path stroke="#0e5b3f" d="M0 ${y}h2374"/>`).join('')}
                <path fill="#138c5d" d="M0 0h64l-6 12H0zM0 120h17l6 12H0z"/><path fill="#c4ced2" d="M1 0h8L1 8zM1 62h6v6H1zM1183 1h8v7h-8zM2367 0h7v8zM2366 62h6v6h-6z"/>
                <path stroke="#c4e8d8" d="M5 124h6M5 126.500h6M5 129h6"/>
            </svg>
            <span class="absolute left-[4px] top-px text-[10px] tracking-[.3px] text-[#e2f5ec]">GTR R(55)</span></div>`;
        tl += '<div class="absolute left-0 top-0 w-px h-full bg-[#d0d2d4]"></div>';
        el('timeline').innerHTML = tl;

        // ---- Mixer: channel and instrument lists ----
        const channels = [
            [1, 'keys', '#0561e0', 'Mast.. Out'], [2, 'keys', '#0561e0', 'Ampl..azer'], [3, 'sine', '#00e184', 'GTR L'], [4, 'sine', '#00e184', 'GTR R'],
            [5, 'keys', '#00c5ee', 'Kt. st. 1'], [6, 'keys', '#6b6120', 'GTR L'], [7, 'keys', '#ffb133', 'Kt. st. 1'], [8, 'keys', '#c82306', 'Kt. st. 1'],
        ];
        el('channel-list').innerHTML = channels.map(([n, ic, color, name]) => `
            <div class="h-[20px] flex items-center ${n === 4 ? 'bg-[#494b53]' : ''} ${n === 6 ? 'text-[#5d6064]' : 'text-[#c8cacc]'}">
                <span class="w-[25px] text-right">${n}</span>
                <span class="w-[6px] h-[18px] ml-[4px] border-x-2 border-[#35373b]"></span>
                <i class="w-[6px] h-[6px] rounded-full bg-current ml-[6px]"></i>
                ${icon(ic, 'w-[11px] h-[7px] ml-[8px]')}
                <span class="w-[6px] h-[18px] ml-[3px]" style="background:${color}"></span>
                <span class="ml-[14px]">${name}</span>
            </div>`).join('');

        const instruments = [['MODO DRUM', 1], ['Ample Metal Hellrazer', 0], ['Kontakt', 1], ['Ample Metal Hellrazer 2', 0], ['Kontakt 2', 1], ['Kontakt 3', 1]];
        el('instrument-list').innerHTML = instruments.map(([name, on], i) => `
            <div class="h-[22px] border-b border-[#1d1e21] shadow-[0_1px_0_#2f3135] flex items-center pl-[5px] pr-[5px] pb-px">
                <span class="${on ? 'text-[#3a9ae0]' : 'text-[#a9abad]'}">${icon('power', 'w-[11px] h-[11px]')}</span>
                <span class="ml-[5px] tracking-[.05px] ${i === 3 ? 'text-[#5d6064]' : 'text-[#d5d7d9]'}">${name}</span>
                ${icon('down', 'w-[9px] h-[5px] ml-auto text-[#77797d]')}
            </div>`).join('');

        // ---- Mixer strips ----
        const strips = [
            { n: 1, src: 'MODO DRUM', c: '#0561e0', label: 'Master Out', db: '+0.8', pan: '&lt;C&gt;', rec: 1, y: 19, t: '#fff' },
            { n: 2, src: 'Ample M..azer', c: '#0561e0', label: 'Ample Me..azer', db: '0dB', pan: '&lt;C&gt;', y: 20, t: '#fff' },
            { n: 3, src: 'Input L+R', c: '#00e184', label: 'GTR L', db: '0dB', pan: '&lt;L&gt;', y: 20, audio: 1, fx: 'AmpliTube 5', t: '#0d3b26' },
            { n: 4, src: 'Input L+R', c: '#00e184', label: 'GTR R', db: '0dB', pan: 'L6', y: 20, audio: 1, sel: 1, rec: 1, fx: 'AmpliTube ..', t: '#0d3b26' },
            { n: 5, src: 'Kontakt', c: '#00c5ee', label: 'Kt. st. 1', db: '+2.9', pan: '&lt;C&gt;', mute: 1, y: 15, t: '#07303a' },
            { n: 7, src: 'Kontakt 2', c: '#ffb133', label: 'Kt. st. 1', db: '0dB', pan: '&lt;C&gt;', y: 20, t: '#3b2a0a' },
            { n: 8, src: 'Kontakt 3', c: '#c82306', label: 'Kt. st. 1', db: '+1.2', pan: '&lt;C&gt;', y: 18, t: '#fff' },
        ];
        const scaleA = [['10', 16], ['6', 24], ['0', 38], ['-6', 53], ['-12', 66], ['-24', 80], ['-36', 95], ['-48', 105]];
        const scaleB = [['0', 27], ['-9', 38], ['-24', 62], ['-36', 80], ['-48', 99], ['-60', 117]];
        const rack = (title, on, h, extra) => `
            <div class="bg-[#3c3e42] px-[3px] pt-[4px]" style="height:${h}px"><div class="flex items-center">
                <span class="${on ? 'text-[#3a9ae0]' : 'text-[#66696d]'}">${icon('power', 'w-[11px] h-[11px]')}</span><span class="ml-[3px] text-[#c0c2c4]">${title}</span>
                ${icon('down', 'w-[7px] h-[5px] ml-auto text-[#85878b]')}${icon('plus', 'w-[8px] h-[8px] ml-[5px] text-[#97999c]')}</div>${extra || ''}</div>`;

        el('strips').innerHTML = strips.map(s => {
            const btn = s.sel ? 'bg-[#50555d] text-[#e2e3e5]' : 'bg-[#3a3d41] text-[#b0b2b5]';
            const head = s.audio ? (s.sel ? 'text-[#e8e9ea]' : 'text-[#b5b7b9]') : 'text-[#f0c14b]';
            const scale = s.sel ? scaleB : scaleA;
            const inserts = s.fx
                ? rack('Inserts', s.sel, 20, '') + `<div class="h-[20px] bg-[#505356] flex items-center pl-[3px] pr-[2px] text-[10.500px] ${s.sel ? 'text-[#c8cacc]' : 'text-[#a9abad]'}"><span class="${s.sel ? 'text-[#51b4ef]' : 'text-[#66696d]'}">${icon('power', 'w-[11px] h-[11px]')}</span><span class="ml-[3px]">${s.fx}</span>${s.sel ? icon('down', 'w-[7px] h-[5px] ml-auto text-[#77797d]') : ''}</div><div class="h-[50px] mt-px ${s.sel ? 'bg-[#60656e]' : 'bg-[#3c3e42]'}"></div><div class="h-[3px] mt-px bg-[#3c3e42]"></div>`
                : rack('Inserts', 0, 56, '') + '<div class="h-px"></div>' + rack('Sends', 0, 38, '');
            return `
            <div class="w-[81px] shrink-0">
                <div class="h-[3px]" style="background:${s.c}"></div><div class="h-px bg-[#141517]"></div>
                <div class="h-[95px]">${inserts}</div><div class="h-[2px] bg-[#141517]"></div>
                <div class="h-[3px]" style="background:${s.c}"></div>
                <div class="h-[296px] px-[5px] pt-[5px] ${s.sel ? 'bg-gradient-to-b from-[#62676f] to-[#5b6068]' : 'bg-[#3c3e42]'}">
                    <div class="h-[36px] border border-[#2a2b2f] ${head} text-center overflow-hidden"><div class="h-[17px] leading-[18px] ${s.sel ? 'bg-[#6a6d70]' : 'bg-[#4b4d4f]'} flex justify-center">${s.src}</div><div class="h-[18px] leading-[18px] ${s.sel ? 'bg-[#55595f]' : 'bg-[#434547]'}">Main</div></div>
                    <div class="h-[17px] mt-px bg-[#25282c] flex ${s.n === 3 ? '' : 'justify-center'}"><i class="w-[3px] bg-[#2f9bec]"></i>${s.n === 3 ? '<svg class="w-[33px] h-[17px]" viewBox="0 0 33 17"><path fill="#1f4c73" d="M0 0h33v17H0z"/><path fill="#2677b7" d="M0 0l33 17H0z"/></svg>' : ''}</div>
                    <div class="h-[20px] flex items-center text-center ${s.sel ? 'text-white' : 'text-[#c8cacc]'}"><span class="w-1/2">${s.db}</span><span class="w-1/2">${s.pan}</span></div>
                    <div class="mx-[1px] h-[42px] border border-[#17181a] rounded-sm bg-[#1a1b1d] grid grid-cols-2 gap-px text-[13px]">
                        <span class="flex items-center justify-center ${s.mute ? 'bg-[#a82c2b] text-white' : btn}">M</span><span class="flex items-center justify-center ${btn}">S</span>
                        <span class="flex items-center justify-center ${s.rec ? 'bg-[#f65858] text-white' : btn}"><i class="w-[10px] h-[10px] rounded-full bg-current"></i></span><span class="flex items-center justify-center ${s.rec ? 'bg-[#62b5cf] text-white' : btn}">${icon('monitor', 'w-[11px] h-[10px]')}</span>
                    </div>
                    <div class="relative h-[130px] mt-[8px] -mx-[5px]">
                        ${scale.map(([v, y]) => `<span class="absolute right-[67px] text-[8px] leading-[8px] text-[#c0c2c4]" style="top:${y - 4}px">${v}</span><i class="absolute left-[18px] w-[9px] h-px ${v === '0' ? 'bg-[#9fb3bf]' : 'bg-[#23587a]'} z-10" style="top:${y}px"></i>`).join('')}
                        <div class="absolute left-[16px] top-0 w-[13px] h-[11px] ${s.sel ? 'bg-[#4c5056]' : 'bg-[#2b2d30]'}"></div>
                        <div class="absolute left-[16px] top-[12px] w-[13px] h-[109px] bg-[#212326]"></div>
                        <div class="absolute left-[33px] top-[50px] w-[14px] h-[71px] ${s.sel ? 'bg-[#83888f]' : 'bg-[#606368]'}"></div>
                        <div class="absolute left-[34px] top-[61px] w-[12px] h-[37px] bg-[repeating-linear-gradient(180deg,#8d9094_0_1px,transparent_1px_9px)]"></div>
                        <div class="absolute left-[39px] top-[16px] w-[2px] h-[88px] bg-[#141517]"></div>
                        <div class="absolute left-[32px] w-[17px] h-[36px] border border-[#55585c] rounded-xs bg-[linear-gradient(180deg,#eee_0_3px,#777_4px,#fff_10px_17px,#444_17px_18px,#fff_18px_28px,#aaa_31px,#eee_32px)] shadow-[0_1px_2px_#000]" style="top:${s.y}px"></div>
                        <div class="absolute left-[59px] top-0 w-[11px] h-[11px] flex flex-col gap-px"><i class="grow ${s.audio ? 'bg-[#51b4ef]' : 'bg-[#55585a]'}"></i><i class="grow bg-[#55585a]"></i><i class="grow bg-[#55585a]"></i></div>
                        <svg class="absolute left-[59px] top-[102px] w-[14px] h-[14px]" viewBox="0 0 14 14"><circle cx="7" cy="7" r="6.500" fill="#a9abad"/><path stroke="#2a2b2f" stroke-width="2" d="M2 2l5 5"/></svg>
                        ${s.n === 1 ? '<i class="absolute left-[18px] top-[117px] w-[9px] h-[3px] bg-[repeating-linear-gradient(90deg,#51b4ef_0_4px,transparent_4px_5px)]"></i>' : ''}
                    </div>
                    <div class="h-[14px] -mt-[4px] pl-[8px] pr-[3px] flex items-center justify-between text-[12px] font-bold ${s.sel ? 'text-white' : 'text-[#b9bbbd]'}">${s.n}${icon(s.audio ? 'wave' : 'keys', s.audio ? 'w-[17px] h-[14px]' : 'w-[17px] h-[10px]')}</div>
                    <div class="h-[16px] mt-[5px] bg-[#212326] flex items-center justify-center text-[10.500px] text-[#77797d]">Auto: Off</div>
                </div>
                <div class="h-[14px] flex items-center justify-center overflow-hidden text-[11px]" style="background:${s.c};color:${s.t}">${s.label}</div>
            </div>`;
        }).join('');

        // Output fader, scale on the right
        el('main-fader').innerHTML = [['6', 17], ['-3', 28], ['-9', 38], ['-24', 62], ['-36', 81], ['-48', 100], ['-60', 117]].map(([v, y]) => `<span class="absolute right-[3px] text-[8px] leading-[8px] text-[#c0c2c4]" style="top:${y - 4}px">${v}</span>`).join('') + `
            <div class="absolute left-[10px] top-0 w-[12px] h-[12px] bg-[#4b4d50]"></div>
            <div class="absolute left-[51px] top-[13px] w-[12px] h-[109px] bg-[#212326]"></div>
            ${[15, 24, 34, 43, 61, 80, 98, 117].map(y => `<i class="absolute left-[53px] w-[8px] h-px ${y === 24 ? 'bg-[#9fb3bf]' : 'bg-[#23587a]'}" style="top:${y}px"></i>`).join('')}
            <div class="absolute left-[33px] top-[60px] w-[14px] h-[62px] bg-[#606368]"></div>
            <div class="absolute left-[33px] top-[28px] w-[13px] h-px bg-[#66696d]"></div><div class="absolute left-[33px] top-[39px] w-[13px] h-px bg-[#d0d2d4]"></div>
            <div class="absolute left-[39px] top-[17px] w-[2px] h-[88px] bg-[#141517]"></div>
            <div class="absolute left-[31px] top-[44px] w-[18px] h-[36px] border border-[#16394d] bg-[linear-gradient(180deg,#63b5dd_0_2px,#2c6480_3px,#5aa9d0_10px_17px,#2c6480_17px_18px,#5aa9d0_18px_28px,#2c6480_31px,#63b5dd_32px)]"></div>
            <svg class="absolute left-[11px] top-[102px] w-[14px] h-[14px]" viewBox="0 0 14 14"><circle cx="7" cy="7" r="6.500" fill="#a9abad"/><path stroke="#2a2b2f" stroke-width="2" d="M2 2l5 5"/></svg>`;

        // ---- Browser tree ----
        const tree = [
            ['folder-multi', 'Multi Instruments'], ['folder-ext', 'External Instruments'], ['folder-fx', 'Note FX'], ['star', 'Favorites'], ['recent', 'Recent'],
            ['folder', 'Ample Sound'], ['folder', 'Arturia'], ['folder', 'Audio Assault'], ['folder', 'Audio Damage, Inc.'], ['folder', 'FabFilter'],
            ['folder-open', 'IK Multimedia'], ['vst', 'MODO DRUM'], ['folder', 'iZotope, Inc.'], ['folder', 'Native Instruments'], ['folder-open', 'Native Instruments GmbH'], ['vst', 'Reaktor 6'],
            ['folder', 'Newfangled Audio'], ['folder', 'Plugin Alliance'], ['presonus', 'PreSonus'], ['folder-open', 'Reveal Sound'], ['vst', 'Spire-1.5'],
            ['folder', 'Roland Cloud'], ['folder', 'Solemn Tones'], ['folder', 'Spitfire Audio'], ['folder', 'u-he'], ['folder', 'Vital Audio'],
        ];
        el('browser-list').innerHTML = tree.map(([ic, name], i) => {
            const arrow = ic === 'vst' ? '<span class="w-[17px]"></span>' : ic === 'folder-open' ? '<svg class="w-[6px] h-[6px] -ml-px" viewBox="0 0 6 6"><path fill="#d0d2d4" d="M6 0v6H0z"/></svg>' : icon('right', 'w-[4px] h-[8px] ml-px text-[#d0d2d4]');
            const size = ic === 'folder' ? 'w-[14px] h-[11px] mr-[3px]' : ic === 'folder-open' ? 'w-[17px] h-[11px]' : ic === 'vst' ? 'w-[17px] h-[16px]' : ic === 'presonus' ? 'w-[15px] h-[12px] mr-[2px]' : 'w-[17px] h-[14px]';
            return `<div class="h-[22px] flex items-center pl-[27px] ${i === 4 ? 'border-b border-[#4a4c50]' : ''}"><span class="${ic === 'vst' ? 'w-[22px]' : 'w-[10px]'} flex items-center">${arrow}</span>${icon(ic, size)}<span class="ml-[5px]">${name}</span></div>`;
        }).join('');
    </script>
</body>
</html>
